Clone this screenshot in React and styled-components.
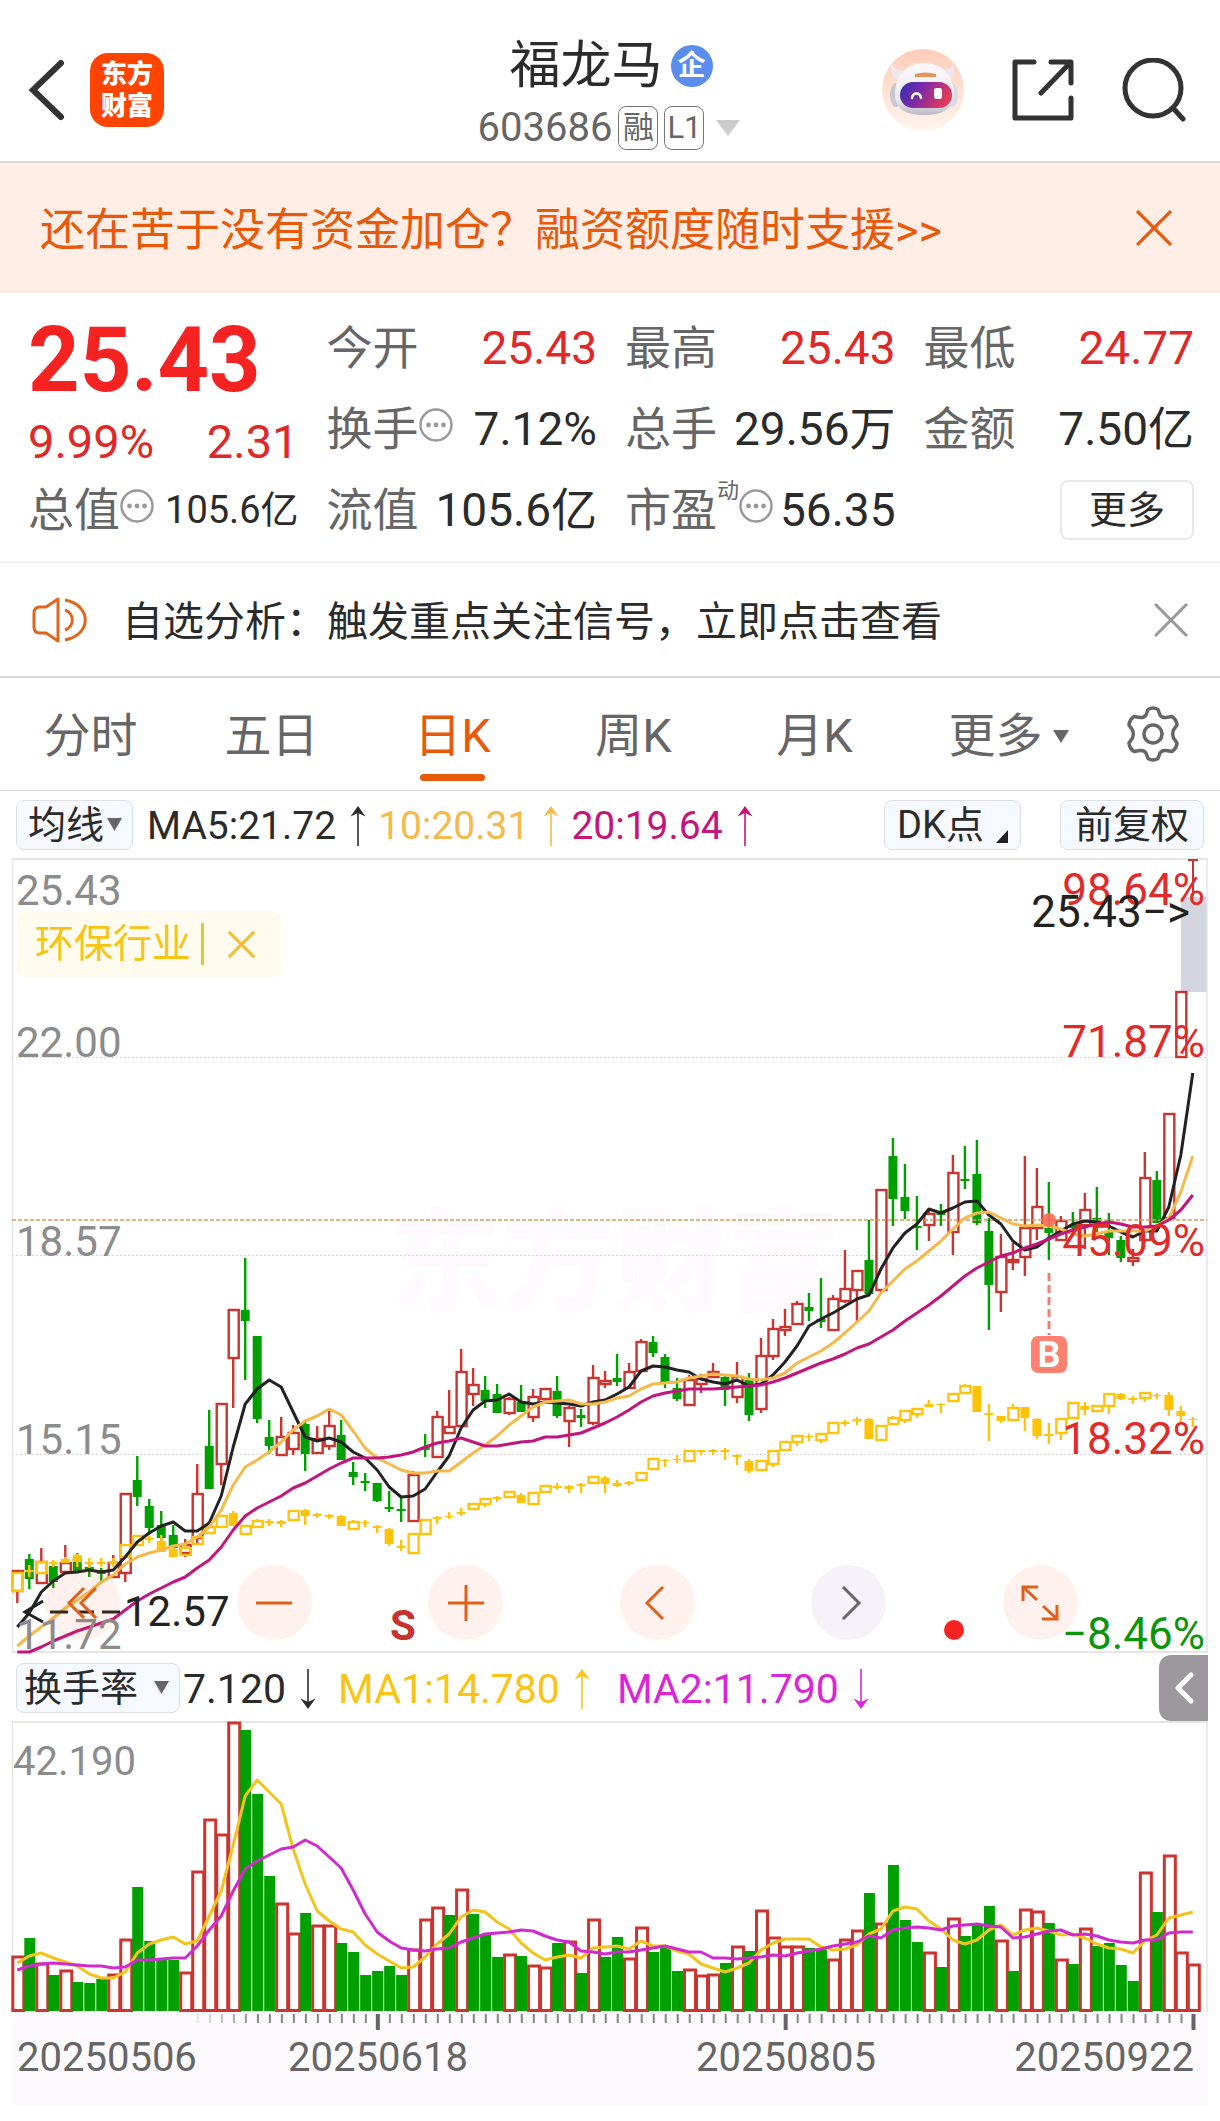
import React from "react";
import styled, { createGlobalStyle } from "styled-components";

const GlobalStyle = createGlobalStyle`
  * { box-sizing: border-box; }
  body {
    margin: 0;
    background: #fff;
    font-family: Roboto, "Noto Sans CJK SC", sans-serif;
    color: #2b2b2b;
  }
  button, select {
    font-family: inherit;
    color: inherit;
    margin: 0;
    padding: 0;
    border: 0;
    background: none;
    cursor: pointer;
  }
  a { color: inherit; text-decoration: none; }
  svg { display: block; flex: none; }
`;

const Page = styled.main`
  padding-bottom: 16px;
`;

/* ---------- header ---------- */

const Header = styled.header`
  display: grid;
  grid-template-columns: 1fr auto 1fr;
  align-items: center;
  height: 163px;
  padding: 18px 34px 0 28px;
  border-bottom: 2px solid #d9d9de;
`;

const HeaderSide = styled.div`
  display: flex;
  align-items: center;
  justify-content: ${(p) => (p.$end ? "flex-end" : "flex-start")};
  gap: ${(p) => (p.$end ? 48 : 24)}px;
`;

const IconButton = styled.button`
  display: flex;
  align-items: center;
  justify-content: center;
`;

const Logo = styled.a`
  width: 74px;
  height: 74px;
  padding: 5px 0;
  border-radius: 18px;
  background: #ff4400;
  color: #fff;
  font-size: 26px;
  line-height: 32px;
  font-weight: 900;
  text-align: center;
`;

const TitleBlock = styled.div`
  display: flex;
  flex-direction: column;
  align-items: center;
  gap: 12px;
  padding: 8px 0 0 8px;
`;

const StockName = styled.h1`
  display: flex;
  align-items: center;
  gap: 8px;
  margin: 0;
  font-size: 51px;
  line-height: 56px;
  font-weight: 400;
`;

const CompanyBadge = styled.span`
  width: 42px;
  height: 42px;
  border-radius: 50%;
  background: #5b8def;
  color: #fff;
  font-size: 28px;
  line-height: 42px;
  font-weight: 700;
  text-align: center;
`;

const CodeRow = styled.div`
  display: flex;
  align-items: center;
  gap: 6px;
  color: #666;
  font-size: 40px;
  line-height: 44px;
`;

const CodeTag = styled.span`
  width: 40px;
  height: 44px;
  border: 1px solid #777;
  border-radius: 8px;
  font-size: 31px;
  line-height: 42px;
  text-align: center;
`;

/* ---------- promo and notice bars ---------- */

const Promo = styled.section`
  display: flex;
  align-items: center;
  justify-content: space-between;
  height: 130px;
  padding: 0 48px 0 40px;
  background: #ffeee6;
  color: #e8590c;
  font-size: 45px;
  line-height: 60px;
  a { padding-top: 6px; }
`;

const Notice = styled.section`
  display: flex;
  align-items: center;
  height: 115px;
  padding: 0 32px;
  border-bottom: 2px solid #d9d9d9;
  font-size: 41px;
  line-height: 56px;
  a { flex: 1; margin-left: 34px; padding-top: 4px; }
`;

/* ---------- quote ---------- */

const Quote = styled.section`
  display: grid;
  grid-template-columns: repeat(4, 1fr);
  grid-template-rows: repeat(3, 81px);
  column-gap: 28px;
  padding: 14px 26px 12px 28px;
  border-bottom: 1px solid #ececec;
`;

const PriceBlock = styled.div`
  grid-row: span 2;
  color: #f52222;
`;

const Price = styled.strong`
  display: block;
  padding-top: 6px;
  font-size: 90px;
  line-height: 96px;
  font-weight: 700;
`;

const Change = styled.div`
  display: flex;
  justify-content: space-between;
  padding-top: 6px;
  color: #e02828;
  font-size: 47px;
  line-height: 54px;
`;

const Cell = styled.div`
  display: flex;
  align-items: center;
  justify-content: space-between;
  font-size: 46px;
  line-height: 60px;
  white-space: nowrap;
`;

const Label = styled.span`
  display: flex;
  align-items: center;
  color: #666;
  svg { margin-top: -8px; }
`;

const Sup = styled.sup`
  align-self: flex-start;
  font-size: 22px;
  line-height: 22px;
`;

const Value = styled.span`
  color: ${(p) => (p.$up ? "#e02828" : "#2b2b2b")};
  font-size: ${(p) => (p.$small ? 38 : 46)}px;
`;

const MoreButton = styled.button`
  width: 134px;
  height: 60px;
  margin-left: auto;
  border: 2px solid #e6e8ea;
  border-radius: 8px;
  font-size: 38px;
  line-height: 54px;
`;

/* ---------- period tabs ---------- */

const Tabs = styled.nav`
  display: grid;
  grid-template-columns: repeat(6, 181fr) 134fr;
  height: 113px;
  border-bottom: 1px solid #d6d6d6;
`;

const Tab = styled.button`
  display: flex;
  flex-direction: column;
  align-items: center;
  justify-content: flex-end;
  gap: 10px;
  padding-bottom: 9px;
  color: ${(p) => (p.$active ? "#e8590c" : "#666")};
  font-size: 47px;
  line-height: 56px;
  &::after {
    content: "";
    width: 65px;
    height: 7px;
    border-radius: 4px;
    background: ${(p) => (p.$active ? "#e8590c" : "transparent")};
  }
`;

const TabText = styled.span`
  display: flex;
  align-items: center;
  gap: 10px;
  padding-left: ${(p) => (p.$arrow ? 26 : 0)}px;
`;

/* ---------- indicator rows ---------- */

const Indicators = styled.div`
  display: flex;
  align-items: center;
  height: 67px;
  padding: 0 12px 0 16px;
  font-size: ${(p) => (p.$large ? 41 : 39)}px;
  line-height: 48px;
`;

const SelectBox = styled.label`
  display: grid;
  align-items: center;
  flex: none;
  width: ${(p) => p.$width}px;
  height: 50px;
  border: 1px solid #dcdfe6;
  border-radius: 8px;
  background: #f6f9ff;
  select, svg { grid-area: 1 / 1; }
  select {
    appearance: none;
    width: 100%;
    height: 48px;
    padding: 0 10px 0 ${(p) => p.$inset}px;
    border-radius: 8px;
    font-size: 38px;
    line-height: 48px;
  }
  svg {
    justify-self: end;
    margin-right: 10px;
    pointer-events: none;
  }
`;

const Reading = styled.span`
  display: flex;
  align-items: center;
  gap: 14px;
  margin-left: ${(p) => p.$space}px;
  padding-top: 2px;
  color: ${(p) => p.$color};
  white-space: nowrap;
`;

const ChipButton = styled.button`
  display: flex;
  align-items: center;
  justify-content: center;
  gap: 12px;
  width: ${(p) => p.$width}px;
  height: 50px;
  margin-left: ${(p) => (p.$push ? "auto" : "39px")};
  margin-right: ${(p) => (p.$push ? 0 : 4)}px;
  border: 1px solid #dcdfe6;
  border-radius: 8px;
  background: #f6f9ff;
  font-size: 38px;
  line-height: 48px;
  svg { margin-top: 24px; }
`;

const DrawerButton = styled(IconButton)`
  width: 49px;
  height: 66px;
  margin-left: auto;
  border-radius: 12px 0 0 12px;
  background: #9c999c;
`;

/* ---------- charts ---------- */

const Charts = styled.section`
  padding: 0 12px;
`;

const PriceArea = styled.div`
  position: relative;
`;

const ChartSvg = styled.svg`
  width: 100%;
  height: auto;
  overflow: visible;
`;

const AxisSvg = styled(ChartSvg)`
  background: #fdfafe;
`;

const ChartText = styled.text`
  font-size: ${(p) => p.$size || 42}px;
  font-weight: ${(p) => p.$weight || 400};
  fill: ${(p) => p.$fill || "#8c8c8c"};
  text-anchor: ${(p) => p.$anchor || "start"};
`;

const SectorTag = styled.div`
  position: absolute;
  left: 5px;
  top: 53px;
  display: flex;
  align-items: center;
  height: 66px;
  padding: 0 26px 0 18px;
  border-radius: 8px;
  background: #fffbee;
  color: #f7c414;
  font-size: 39px;
  line-height: 54px;
`;

const TagRule = styled.span`
  width: 3px;
  height: 42px;
  margin: 0 24px 0 10px;
  background: #f0c030;
`;

const Controls = styled.div`
  position: absolute;
  left: 33px;
  right: 130px;
  bottom: 14px;
  display: flex;
  justify-content: space-between;
`;

const RoundButton = styled(IconButton)`
  width: 75px;
  height: 75px;
  border-radius: 50%;
  background: ${(p) => (p.$muted ? "rgba(90, 50, 130, 0.06)" : "rgba(255, 90, 40, 0.08)")};
`;

/* ---------- small drawings ---------- */

const Cross = ({ size, color, width = 3 }) => (
  <svg width={size} height={size} viewBox="0 0 34 34" aria-hidden="true">
    <path d="M1 1 33 33M33 1 1 33" stroke={color} strokeWidth={width} fill="none" />
  </svg>
);

const Caret = ({ width, height, color }) => (
  <svg width={width} height={height} viewBox="0 0 10 10" preserveAspectRatio="none" aria-hidden="true">
    <path d="M0 0h10L5 10z" fill={color} />
  </svg>
);

const Trend = ({ down }) => (
  <svg width="16" height="40" viewBox="0 0 16 40" aria-hidden="true">
    <g transform={down ? "rotate(180 8 20)" : undefined} fill="currentColor">
      <path d="M7.200 3h1.600v37H7.200z" />
      <path d="M8 0 15.500 10.500 8 7 .5 10.500z" />
    </g>
  </svg>
);

const InfoDots = () => (
  <svg width="34" height="34" viewBox="0 0 34 34" aria-hidden="true">
    <circle cx="17" cy="17" r="15.500" fill="none" stroke="#999" strokeWidth="2.400" />
    <g fill="#999">
      <circle cx="9.500" cy="17" r="2.400" />
      <circle cx="17" cy="17" r="2.400" />
      <circle cx="24.500" cy="17" r="2.400" />
    </g>
  </svg>
);

const Robot = () => (
  <svg width="82" height="82" viewBox="0 0 82 82" aria-hidden="true">
    <defs>
      <linearGradient id="halo" x1="0" y1="0" x2="0" y2="1">
        <stop offset="0" stopColor="#ffcdb8" />
        <stop offset="1" stopColor="#fff5f0" />
      </linearGradient>
      <linearGradient id="shell" x1="0" y1="0" x2="0" y2="1">
        <stop offset="0" stopColor="#fbf9fa" />
        <stop offset="0.700" stopColor="#eceaf0" />
        <stop offset="1" stopColor="#bcb9c4" />
      </linearGradient>
      <linearGradient id="visor" x1="0" y1="0" x2="1" y2="0.300">
        <stop offset="0" stopColor="#2f2fb0" />
        <stop offset="0.450" stopColor="#7c2aa8" />
        <stop offset="1" stopColor="#e03a5c" />
      </linearGradient>
    </defs>
    <circle cx="41" cy="41" r="41" fill="url(#halo)" />
    <path d="M10 15c-3 8 0 14 7 16l7-10c-8 1-12-1-14-6zM71 15c3 8 0 14-6 16l-8-10c8 1 12-1 14-6z" fill="#efe9ee" />
    <ellipse cx="14" cy="46" rx="6" ry="12" fill="#c9c6d0" />
    <ellipse cx="70" cy="46" rx="6" ry="12" fill="#dcd9e2" />
    <path d="M42 14c17 0 30 12 30 31 0 14-10 21-30 21S13 59 13 45c0-19 12-31 29-31z" fill="url(#shell)" />
    <rect x="18" y="33" width="52" height="26" rx="13" fill="url(#visor)" />
    <path d="M33 25c7-2 14-2 21 0v3H33z" fill="#e8935a" />
    <path d="M30 49c1-6 8-6 9 0" fill="none" stroke="#fff" strokeWidth="2.500" strokeLinecap="round" />
    <rect x="52" y="39" width="8" height="11" rx="2.500" fill="#fff" />
  </svg>
);

const Speaker = () => (
  <svg width="56" height="48" viewBox="0 0 56 48" fill="none" stroke="#e0661f" strokeWidth="3" strokeLinejoin="round" aria-hidden="true">
    <path d="M26 3v42L14 37H8q-6 0-6-6V17q0-6 6-6h6z" />
    <path d="M33 14a10.500 10.500 0 0 1 0 20M33 4c27 5 27 35 0 40" />
  </svg>
);

const Gear = () => (
  <svg width="58" height="58" viewBox="0 0 58 58" fill="none" stroke="#666" strokeWidth="3.500" strokeLinejoin="round" aria-hidden="true">
    <path d="M24 4.500Q29 1.500 34 4.500L36 10Q38 13 42 12.500L48 11.500Q52.500 14.500 53 20L49.500 25Q48 29 49.500 33L53 38Q52.500 43.500 48 46.500L42 45.500Q38 45 36 48L34 53.500Q29 56.500 24 53.500L22 48Q20 45 16 45.500L10 46.500Q5.500 43.500 5 38L8.500 33Q10 29 8.500 25L5 20Q5.500 14.500 10 11.500L16 12.500Q20 13 22 10Z" />
    <circle cx="29" cy="29" r="9" />
  </svg>
);

/* ---------- chart data: [kind, high, top, bottom, low] per trading day ---------- */

const X0 = 17.3;
const STEP = 11.995;
const xAt = (i) => X0 + i * STEP;

const candles = [
  ["r",1571,1571,1591,1603],["g",1554,1559,1579,1589],["r",1548,1562,1583,1583],["g",1563,1566,1582,1588],["r",1545,1563,1572,1574],
  ["g",1553,1558,1571,1572],["g",1563,1567,1570,1577],["g",1568,1570,1574,1583],["r",1555,1563,1577,1577],["r",1494,1494,1573,1582],
  ["g",1456,1480,1497,1506],["g",1499,1506,1528,1533],["g",1511,1525,1538,1543],["g",1525,1535,1548,1555],["r",1539,1545,1553,1557],
  ["r",1464,1494,1538,1543],["g",1410,1446,1489,1489],["r",1404,1404,1464,1485],["r",1310,1310,1358,1408],["g",1258,1310,1321,1380],
  ["g",1336,1336,1419,1423],["g",1420,1437,1446,1454],["r",1417,1437,1455,1455],["r",1425,1433,1449,1455],["g",1422,1424,1454,1471],
  ["r",1426,1439,1453,1453],["r",1411,1426,1446,1450],["g",1420,1435,1460,1460],["g",1462,1472,1477,1485],["g",1473,1481,1483,1491],
  ["g",1483,1483,1501,1502],["g",1491,1507,1509,1512],["g",1497,1509,1511,1522],["r",1471,1475,1521,1521],["g",1434,1447,1450,1457],
  ["r",1411,1417,1457,1457],["r",1390,1427,1433,1433],["r",1349,1372,1426,1426],["r",1368,1385,1394,1406],["g",1376,1390,1401,1408],
  ["g",1384,1394,1413,1413],["r",1397,1399,1413,1415],["g",1385,1402,1412,1412],["r",1389,1397,1417,1422],["r",1388,1389,1399,1399],
  ["g",1376,1391,1416,1418],["r",1406,1408,1421,1447],["g",1409,1415,1418,1427],["r",1365,1378,1423,1425],["r",1371,1381,1384,1388],
  ["g",1354,1378,1382,1386],["r",1363,1372,1388,1388],["r",1339,1342,1371,1371],["g",1336,1342,1353,1357],["g",1354,1357,1382,1388],
  ["g",1378,1388,1399,1401],["r",1375,1380,1405,1405],["r",1374,1379,1384,1393],["r",1363,1372,1377,1377],["g",1374,1377,1390,1406],
  ["r",1362,1377,1397,1403],["g",1373,1380,1415,1421],["r",1338,1356,1409,1413],["r",1319,1329,1356,1360],["r",1309,1327,1330,1336],
  ["r",1301,1304,1324,1324],["g",1293,1307,1311,1321],["g",1278,1319,1322,1328],["r",1295,1299,1330,1330],["r",1250,1289,1301,1303],
  ["r",1270,1271,1290,1322],["g",1220,1260,1294,1294],["r",1190,1190,1290,1292],["g",1138,1156,1199,1226],["g",1164,1197,1211,1219],
  ["g",1196,1226,1228,1250],["r",1210,1214,1225,1241],["g",1204,1212,1215,1226],["r",1155,1173,1232,1255],["g",1146,1179,1181,1189],
  ["g",1140,1174,1223,1225],["g",1218,1231,1285,1330],["r",1234,1257,1292,1312],["r",1243,1260,1262,1270],["r",1156,1228,1257,1276],
  ["r",1168,1207,1228,1240],["g",1182,1228,1233,1260],["r",1216,1221,1240,1240],["g",1212,1225,1228,1236],["r",1193,1210,1225,1249],
  ["g",1187,1218,1222,1232],["g",1213,1232,1238,1255],["g",1236,1240,1258,1262],["r",1249,1258,1261,1266],["r",1152,1178,1240,1242],
  ["g",1171,1180,1223,1223],["r",1114,1114,1218,1218],["r",992,992,1057,1057],
];

const sector = [
  ["h",1573,1573,1591,1591],["f",1565,1570,1572,1577],["h",1562,1562,1573,1573],["f",1560,1562,1564,1567],["f",1557,1559,1563,1563],
  ["f",1554,1555,1562,1567],["f",1558,1562,1564,1568],["f",1558,1562,1564,1567],["f",1558,1561,1564,1567],["h",1545,1545,1557,1557],
  ["h",1536,1536,1545,1545],["f",1536,1538,1540,1543],["f",1535,1541,1552,1552],["f",1545,1549,1557,1557],["h",1545,1548,1555,1555],
  ["h",1537,1537,1544,1544],["h",1527,1527,1533,1533],["h",1516,1516,1527,1527],["f",1511,1513,1526,1526],["h",1526,1526,1534,1534],
  ["h",1519,1521,1527,1527],["f",1519,1521,1523,1526],["f",1520,1521,1524,1527],["h",1511,1511,1520,1520],["f",1509,1510,1516,1525],
  ["f",1513,1514,1516,1518],["f",1514,1515,1517,1519],["f",1515,1516,1526,1526],["h",1520,1522,1529,1529],["f",1520,1522,1523,1527],
  ["f",1525,1526,1528,1533],["f",1528,1529,1544,1546],["f",1540,1546,1548,1551],["h",1534,1534,1553,1553],["h",1520,1520,1534,1534],
  ["f",1516,1517,1519,1524],["f",1512,1516,1517,1519],["f",1508,1512,1514,1516],["h",1504,1504,1509,1509],["h",1499,1499,1504,1507],
  ["f",1496,1497,1499,1502],["h",1492,1492,1497,1497],["f",1493,1495,1503,1503],["h",1493,1493,1504,1504],["h",1486,1486,1492,1492],
  ["f",1483,1486,1488,1490],["f",1485,1486,1489,1493],["f",1483,1484,1486,1493],["h",1477,1477,1483,1483],["f",1476,1478,1484,1493],
  ["f",1480,1483,1486,1487],["f",1481,1482,1484,1486],["h",1473,1473,1480,1480],["h",1459,1459,1469,1469],["f",1459,1460,1461,1467],
  ["f",1455,1459,1460,1463],["h",1451,1451,1461,1461],["f",1450,1450,1452,1455],["f",1449,1450,1452,1455],["f",1448,1450,1452,1460],
  ["f",1454,1455,1457,1465],["f",1459,1461,1471,1473],["h",1461,1461,1470,1470],["h",1451,1451,1464,1467],["h",1442,1442,1450,1450],
  ["h",1436,1436,1442,1446],["f",1434,1436,1437,1441],["h",1434,1434,1440,1443],["h",1423,1423,1433,1433],["f",1420,1422,1424,1426],
  ["f",1417,1419,1421,1425],["f",1418,1419,1439,1439],["h",1426,1426,1440,1440],["h",1416,1418,1424,1424],["h",1411,1411,1420,1423],
  ["h",1409,1409,1414,1418],["f",1400,1404,1407,1407],["f",1403,1404,1405,1413],["h",1394,1394,1401,1401],["h",1384,1386,1393,1393],
  ["f",1386,1386,1412,1412],["f",1404,1413,1415,1441],["f",1416,1416,1421,1423],["h",1404,1408,1420,1420],["f",1407,1407,1418,1431],
  ["f",1418,1419,1436,1439],["f",1423,1434,1436,1444],["h",1419,1419,1433,1440],["h",1403,1403,1418,1418],["f",1402,1406,1410,1415],
  ["h",1406,1406,1411,1411],["h",1394,1394,1406,1414],["f",1393,1394,1399,1400],["f",1396,1398,1400,1404],["h",1393,1393,1398,1402],
  ["f",1393,1395,1396,1399],["f",1392,1395,1410,1416],["f",1406,1411,1416,1422],["f",1417,1419,1420,1427],
];

const ma5 = [
  1627,1613,1592,1581,1573,1572,1570,1572,1570,1557,1542,1533,1526,1522,1531,1531,1523,1496,1447,1404,
  1389,1380,1387,1412,1437,1441,1438,1442,1452,1458,1470,1487,1497,1496,1489,1472,1456,1428,1410,1401,
  1400,1394,1402,1404,1402,1403,1404,1406,1402,1400,1394,1387,1371,1366,1367,1370,1372,1379,1382,1384,
  1380,1386,1384,1375,1362,1346,1326,1319,1313,1306,1299,1295,1269,1248,1233,1224,1209,1213,1208,1202,
  1201,1215,1224,1241,1250,1247,1238,1231,1224,1221,1222,1226,1232,1237,1231,1231,1207,1155,1073,
];

const ma10 = [
  1646,1636,1627,1618,1608,1600,1592,1582,1575,1564,1557,1553,1550,1546,1544,1537,1527,1510,1485,1467,
  1460,1452,1442,1430,1421,1416,1409,1415,1431,1448,1458,1464,1470,1473,1473,1471,1471,1462,1453,1445,
  1436,1425,1416,1407,1402,1401,1400,1404,1404,1402,1398,1396,1389,1384,1383,1382,1378,1376,1374,1375,
  1376,1379,1380,1378,1373,1363,1357,1351,1343,1333,1322,1311,1293,1281,1269,1261,1251,1241,1229,1218,
  1213,1212,1218,1224,1226,1225,1226,1229,1234,1236,1234,1231,1231,1231,1231,1226,1218,1192,1156,
];

const ma20 = [
  1652,1652,1647,1641,1636,1631,1627,1623,1619,1610,1601,1594,1588,1582,1577,1568,1560,1547,1530,1516,
  1508,1502,1496,1488,1483,1476,1469,1463,1458,1458,1458,1457,1455,1452,1447,1443,1441,1438,1442,1446,
  1446,1444,1442,1441,1437,1437,1435,1433,1428,1423,1417,1410,1402,1396,1393,1391,1389,1389,1389,1388,
  1387,1386,1385,1382,1378,1373,1368,1363,1359,1354,1348,1344,1337,1330,1321,1313,1305,1296,1286,1276,
  1268,1262,1256,1253,1248,1244,1239,1234,1230,1227,1224,1222,1224,1227,1227,1226,1220,1210,1195,
];

/* positive: rising day, negative: falling day */
const volumes = [
  1956,-1937,1963,-1974,1970,-1981,-1982,-1978,1974,1939,-1886,-1940,-1959,-1959,1972,1871,1819,1834,1722,-1729,
  -1793,-1875,1903,1933,-1912,1925,1925,-1942,-1951,-1974,-1970,-1965,-1974,1949,1919,1907,-1914,1889,-1913,-1933,
  -1956,1954,-1955,1965,1967,-1942,1941,-1972,1919,-1956,-1936,1958,1927,-1951,-1947,-1970,1969,1975,1974,-1962,
  1946,-1950,1910,1937,1946,1946,-1947,-1948,1959,1939,1930,-1892,1923,-1864,-1919,-1941,1952,-1966,1918,-1935,
  -1924,-1905,1940,-1970,1909,1911,-1922,1959,-1963,1928,-1945,-1942,-1964,-1980,1872,-1911,1855,1952,1964,
];

const volMa1 = [
  1962,1955,1952,1957,1961,1965,1973,1977,1977,1971,1952,1943,1939,1936,1943,1940,1915,1890,1844,1795,
  1779,1791,1803,1848,1883,1910,1920,1928,1931,1944,1953,1960,1967,1966,1956,1943,1933,1916,1909,1911,
  1921,1928,1942,1952,1959,1956,1954,1957,1947,1946,1945,1948,1940,1945,1945,1950,1953,1963,1967,1971,
  1967,1962,1949,1942,1938,1938,1938,1946,1949,1948,1944,1933,1928,1910,1906,1908,1920,1928,1939,1943,
  1939,1929,1924,1934,1929,1927,1930,1934,1933,1937,1943,1947,1948,1952,1940,1934,1917,1914,1911,
];

const volMa2 = [
  1969,1965,1963,1962,1963,1964,1965,1965,1967,1966,1959,1959,1958,1957,1957,1945,1929,1915,1890,1868,
  1860,1854,1848,1846,1839,1845,1856,1867,1889,1913,1931,1940,1947,1949,1950,1948,1947,1941,1937,1933,
  1932,1931,1929,1930,1935,1939,1941,1950,1951,1953,1951,1951,1949,1947,1945,1948,1951,1951,1957,1957,
  1958,1957,1956,1954,1955,1952,1950,1948,1945,1943,1941,1935,1937,1929,1927,1926,1927,1929,1925,1924,
  1923,1925,1926,1937,1936,1933,1930,1929,1934,1933,1935,1939,1941,1942,1939,1939,1932,1931,1931,
];

const RED = "#cc3430";
const GREEN = "#00a000";
const GOLD = "#ffc409";

const Candle = ({ i, data, color, hollow }) => {
  const [, high, top, bottom, low] = data;
  const x = xAt(i);
  const inner = Math.max(bottom - top, 1);
  return (
    <g stroke={color} strokeWidth="2.400" fill={hollow ? "none" : color}>
      {high < top && <path d={`M${x} ${high}V${top}`} />}
      {low > bottom && <path d={`M${x} ${bottom}V${low}`} />}
      {hollow ? (
        <rect x={x - 4.5} y={top} width="10" height={Math.max(inner, 2)} />
      ) : (
        <rect x={x - 4.5} y={top} width="9" height={inner} stroke="none" />
      )}
    </g>
  );
};

const Line = ({ points, color, width = 3 }) => (
  <polyline
    points={points.map((y, i) => `${xAt(i)},${y}`).join(" ")}
    fill="none"
    stroke={color}
    strokeWidth={width}
    strokeLinejoin="round"
  />
);

const priceLabels = [
  ["25.43", "98.64%", 905],
  ["22.00", "71.87%", 1057],
  ["18.57", "45.09%", 1256],
  ["15.15", "18.32%", 1454],
  ["11.72", "−8.46%", 1649],
];

const PriceChart = () => (
  <ChartSvg viewBox="12 858 1196 796" role="img" aria-label="日K">
    <ChartText x="388" y="1302" $size={113} $weight={900} $fill="#fefafe">东方财富</ChartText>
    <rect x="1181" y="897" width="26" height="95" fill="#d5d5df" />
    <g stroke="#d8d4d7" strokeWidth="1" strokeDasharray="2 2">
      <path d="M12 1057.500H1207M12 1255.500H1207M12 1454.500H1207" />
    </g>
    <g fill="none" stroke="#e5e5e5">
      <path d="M12 859H1208M12 1652H1208" strokeWidth="2" />
      <path d="M12.500 858V1653M1207 858V1653" strokeWidth="1.500" />
    </g>
    {candles.map((c, i) => (
      <Candle key={i} i={i} data={c} color={c[0] === "r" ? RED : GREEN} hollow={c[0] === "r"} />
    ))}
    <path d="M1188 860H1198M1193 860V896" stroke={RED} strokeWidth="2" fill="none" />
    {sector.map((c, i) => (
      <Candle key={i} i={i} data={c} color={GOLD} hollow={c[0] === "h"} />
    ))}
    <path d="M12 1220H1207" stroke="#d99a60" strokeWidth="1.500" strokeDasharray="4 2" />
    <Line points={ma5} color="#222" />
    <Line points={ma10} color="#f6b94b" />
    <Line points={ma20} color="#c4157c" />

    <circle cx="1049" cy="1220" r="7" fill="#fb6a55" opacity="0.900" />
    <path d="M1049 1273V1335" stroke="#ee8073" strokeWidth="3" strokeDasharray="8 4" />
    <rect x="1031" y="1336" width="36" height="37" rx="7" fill="#fd8071" />
    <ChartText x="1049" y="1367" $size={36} $weight={700} $fill="#fff" $anchor="middle">B</ChartText>

    {priceLabels.map(([price, percent, y]) => (
      <React.Fragment key={price}>
        <ChartText x="16" y={y}>{price}</ChartText>
        <ChartText x="1205" y={y} $size={44} $anchor="end" $fill={percent.startsWith("−") ? "#0a960a" : "#e32a2a"}>
          {percent}
        </ChartText>
      </React.Fragment>
    ))}
    <ChartText x="1190" y="927" $size={44} $fill="#222" $anchor="end">{"25.43−>"}</ChartText>
    <path d="M43 1601 25 1612 43 1622M50 1612H68M77 1612H94M102 1612H120" fill="none" stroke="#222" strokeWidth="3" />
    <ChartText x="124" y="1626" $fill="#222">12.57</ChartText>
    <ChartText x="390" y="1640" $weight={700} $fill="#c9332e">S</ChartText>
    <circle cx="954" cy="1630" r="10" fill="#f52222" />
  </ChartSvg>
);

const VolumeChart = () => (
  <ChartSvg viewBox="12 1720 1196 291" role="img" aria-label="换手率">
    <g fill="none" stroke="#e5e5e5">
      <path d="M12 1721H1208" strokeWidth="2" />
      <path d="M12.500 1720V2011M1207 1720V2011" strokeWidth="1.500" />
    </g>
    <ChartText x="13" y="1774" $size={40}>42.190</ChartText>
    {volumes.map((v, i) => {
      const y = Math.abs(v);
      const x = xAt(i);
      return v > 0 ? (
        <rect key={i} x={x - 4.5} y={y} width="11" height={2009.5 - y} fill="#fff" stroke={RED} strokeWidth="3" />
      ) : (
        <rect key={i} x={x - 5} y={y} width="11" height={2010 - y} fill={GREEN} />
      );
    })}
    <Line points={volMa1} color="#f2c41d" />
    <Line points={volMa2} color="#cf2bcf" />
  </ChartSvg>
);

const TimeAxis = () => (
  <AxisSvg viewBox="12 2011 1196 93" role="img" aria-label="日期">
    {volumes.map((_, i) => {
      if (i < 15) return null;
      const major = i === 30 || i === 64 || i === 98;
      return (
        <path
          key={i}
          d={`M${xAt(i) + 0.7} 2013V${major ? 2029 : 2022}`}
          stroke={major ? "#666" : "#858585"}
          strokeWidth={major ? 4 : 2}
          opacity={Math.min(1, (i - 14) / 6)}
        />
      );
    })}
    <ChartText x="17" y="2070" $size={40} $fill="#666">20250506</ChartText>
    <ChartText x="378" y="2070" $size={40} $fill="#666" $anchor="middle">20250618</ChartText>
    <ChartText x="786" y="2070" $size={40} $fill="#666" $anchor="middle">20250805</ChartText>
    <ChartText x="1194" y="2070" $size={40} $fill="#666" $anchor="end">20250922</ChartText>
  </AxisSvg>
);

const controls = [
  ["最早", "M20 4 5 19 20 34M32 4 17 19 32 34"],
  ["缩小", "M1 19H37"],
  ["放大", "M1 19H37M19 1V37"],
  ["向左", "M25 3 9 19 25 35"],
  ["向右", "M13 3 29 19 13 35", true],
  ["全屏", "M2 17V3H17M3 4 16 16M36 21V35H21M35 34 22 22"],
];

export default function App() {
  return (
    <>
      <GlobalStyle />
      <Page>
        <Header>
          <HeaderSide>
            <IconButton aria-label="返回">
              <svg width="38" height="62" viewBox="0 0 38 62" aria-hidden="true">
                <path d="M33 4 5 31 33 58" fill="none" stroke="#333" strokeWidth="6" strokeLinecap="round" />
              </svg>
            </IconButton>
            <Logo href="#home">东方<br />财富</Logo>
          </HeaderSide>
          <TitleBlock>
            <StockName>福龙马<CompanyBadge>企</CompanyBadge></StockName>
            <CodeRow>
              603686
              <CodeTag>融</CodeTag>
              <CodeTag>L1</CodeTag>
              <IconButton aria-label="切换股票">
                <svg width="34" height="16" viewBox="0 0 34 16" aria-hidden="true">
                  <path d="M6 0h24L18 16z" fill="#ccc" />
                </svg>
              </IconButton>
            </CodeRow>
          </TitleBlock>
          <HeaderSide $end>
            <IconButton aria-label="智能助手"><Robot /></IconButton>
            <IconButton aria-label="分享">
              <svg width="62" height="62" viewBox="0 0 62 62" fill="none" stroke="#333" strokeWidth="5" strokeLinecap="round" strokeLinejoin="round" aria-hidden="true">
                <path d="M22 3H3V59H59V39M39 3H59V24M58 4 29 34" />
              </svg>
            </IconButton>
            <IconButton aria-label="搜索">
              <svg width="64" height="64" viewBox="0 0 64 64" fill="none" stroke="#333" strokeWidth="5" strokeLinecap="round" aria-hidden="true">
                <circle cx="31" cy="30" r="28" />
                <path d="M51 50 61 61" />
              </svg>
            </IconButton>
          </HeaderSide>
        </Header>

        <Promo>
          <a href="#margin">还在苦于没有资金加仓？融资额度随时支援&gt;&gt;</a>
          <IconButton aria-label="关闭"><Cross size={36} color="#e8590c" /></IconButton>
        </Promo>

        <Quote>
          <PriceBlock>
            <Price>25.43</Price>
            <Change><span>9.99%</span><span>2.31</span></Change>
          </PriceBlock>
          <Cell><Label>今开</Label><Value $up>25.43</Value></Cell>
          <Cell><Label>最高</Label><Value $up>25.43</Value></Cell>
          <Cell><Label>最低</Label><Value $up>24.77</Value></Cell>
          <Cell><Label>换手<InfoDots /></Label><Value>7.12%</Value></Cell>
          <Cell><Label>总手</Label><Value>29.56万</Value></Cell>
          <Cell><Label>金额</Label><Value>7.50亿</Value></Cell>
          <Cell><Label>总值<InfoDots /></Label><Value $small>105.6亿</Value></Cell>
          <Cell><Label>流值</Label><Value>105.6亿</Value></Cell>
          <Cell><Label>市盈<Sup>动</Sup><InfoDots /></Label><Value>56.35</Value></Cell>
          <Cell><MoreButton>更多</MoreButton></Cell>
        </Quote>

        <Notice>
          <Speaker />
          <a href="#analysis">自选分析：触发重点关注信号，立即点击查看</a>
          <IconButton aria-label="关闭提示"><Cross size={34} color="#999" /></IconButton>
        </Notice>

        <Tabs>
          {["分时", "五日", "日K", "周K", "月K", "更多"].map((name) => (
            <Tab key={name} $active={name === "日K"}>
              <TabText $arrow={name === "更多"}>
                {name}
                {name === "更多" && <Caret width={16} height={13} color="#666" />}
              </TabText>
            </Tab>
          ))}
          <IconButton aria-label="设置"><Gear /></IconButton>
        </Tabs>

        <Indicators>
          <SelectBox $width={117} $inset={11}>
            <select aria-label="主图指标" defaultValue="均线"><option>均线</option></select>
            <Caret width={15} height={13} color="#666" />
          </SelectBox>
          <Reading $space={14} $color="#2b2b2b">MA5:21.72<Trend /></Reading>
          <Reading $space={12} $color="#f5b94c">10:20.31<Trend /></Reading>
          <Reading $space={12} $color="#c4157c">20:19.64<Trend /></Reading>
          <ChipButton $push $width={137}>
            DK点
            <svg width="12" height="13" viewBox="0 0 12 13" aria-hidden="true"><path d="M12 0V13H0z" fill="#222" /></svg>
          </ChipButton>
          <ChipButton $width={144}>前复权</ChipButton>
        </Indicators>

        <Charts>
          <PriceArea>
            <PriceChart />
            <SectorTag>
              环保行业
              <TagRule />
              <IconButton aria-label="移除叠加"><Cross size={27} color="#f0c030" width={4} /></IconButton>
            </SectorTag>
            <Controls>
              {controls.map(([name, d, muted]) => (
                <RoundButton key={name} aria-label={name} $muted={muted}>
                  <svg width="38" height="38" viewBox="0 0 38 38" aria-hidden="true">
                    <path d={d} fill="none" stroke={muted ? "#666" : "#e0601a"} strokeWidth="3" />
                  </svg>
                </RoundButton>
              ))}
            </Controls>
          </PriceArea>
        </Charts>

        <Indicators $large>
          <SelectBox $width={164} $inset={7}>
            <select aria-label="副图指标" defaultValue="换手率"><option>换手率</option></select>
            <Caret width={15} height={13} color="#666" />
          </SelectBox>
          <Reading $space={3} $color="#2b2b2b">7.120<Trend down /></Reading>
          <Reading $space={22} $color="#f9c416">MA1:14.780<Trend /></Reading>
          <Reading $space={27} $color="#d826d8">MA2:11.790<Trend down /></Reading>
          <DrawerButton aria-label="展开侧栏">
            <svg width="22" height="34" viewBox="0 0 22 34" aria-hidden="true">
              <path d="M18 4 5 17 18 30" fill="none" stroke="#fff" strokeWidth="5" strokeLinecap="round" strokeLinejoin="round" />
            </svg>
          </DrawerButton>
        </Indicators>

        <Charts>
          <VolumeChart />
          <TimeAxis />
        </Charts>
      </Page>
    </>
  );
}
